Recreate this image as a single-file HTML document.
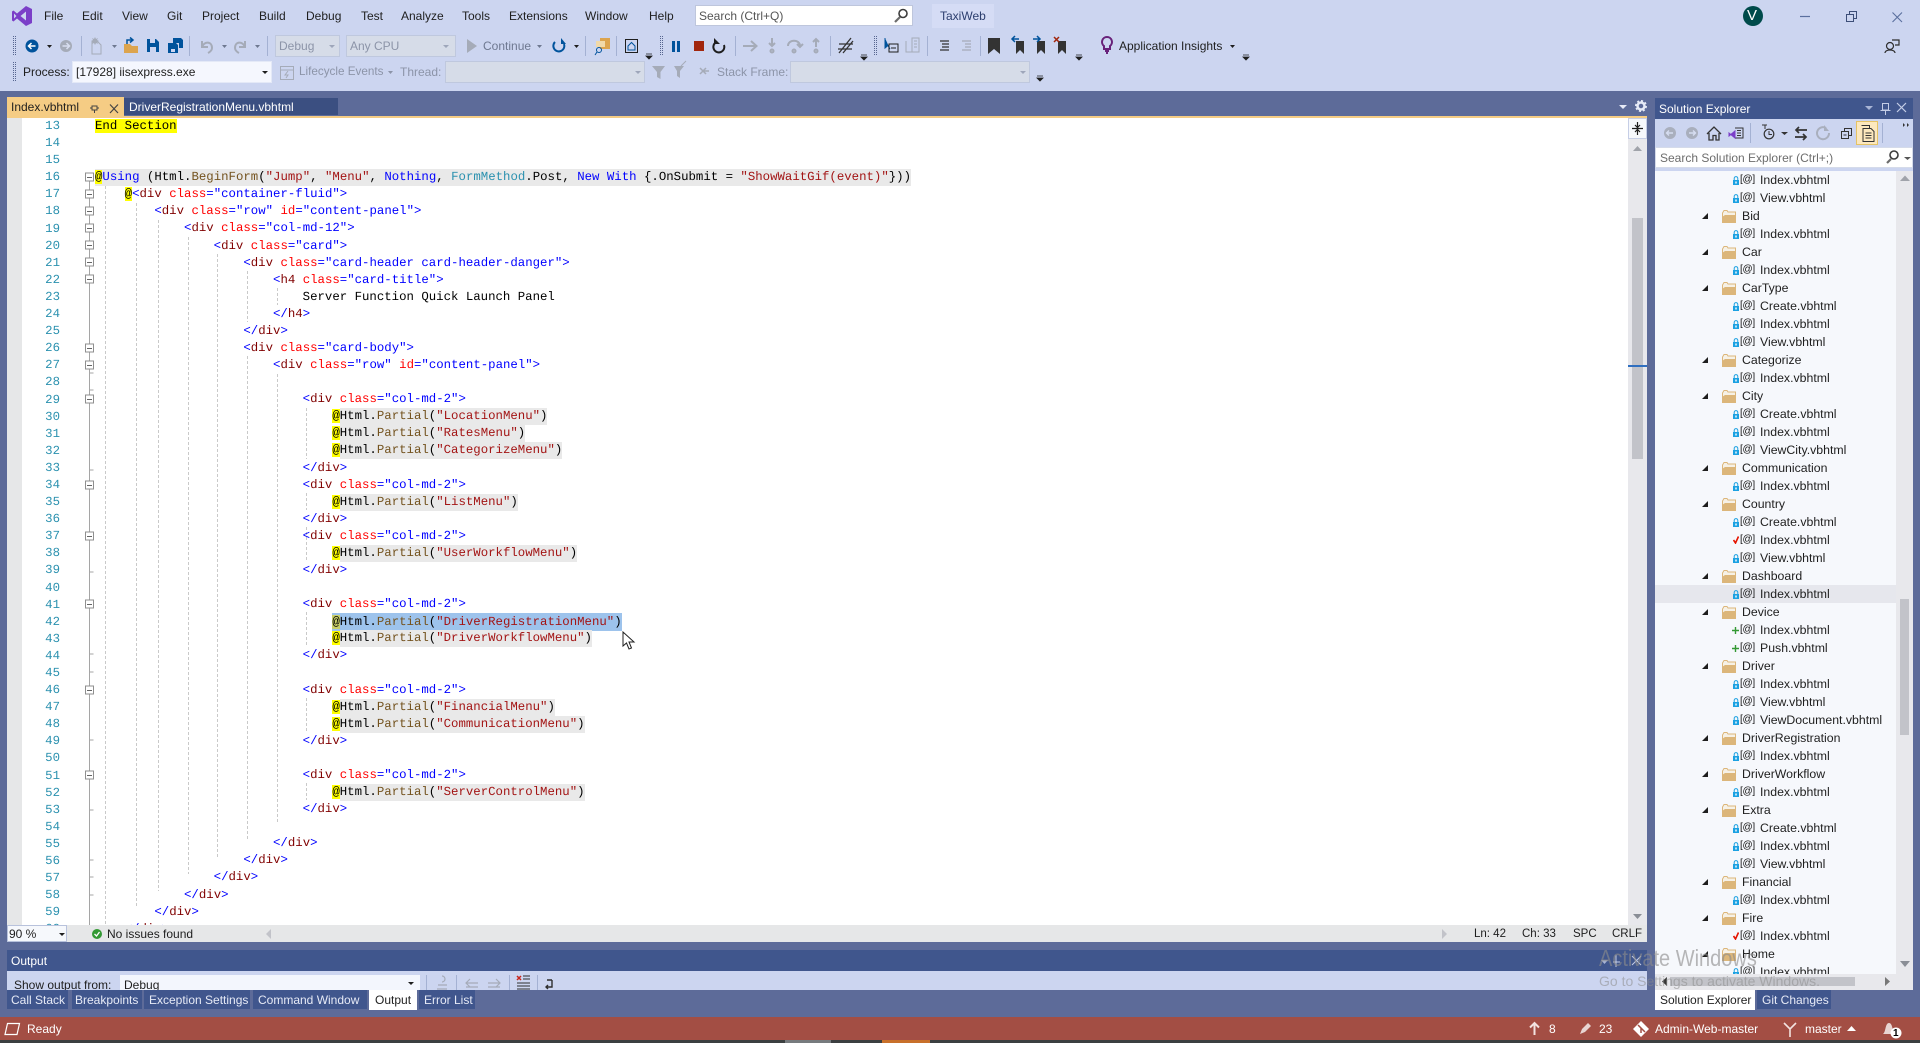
<!DOCTYPE html>
<html lang="en"><head><meta charset="utf-8"><title>TaxiWeb</title>
<style>
html,body{margin:0;padding:0;width:1920px;height:1043px;overflow:hidden;background:#5D6B99}
body{position:relative;font-family:"Liberation Sans",sans-serif;font-size:12px;color:#1E1E1E}
.a{position:absolute}
.t{position:absolute;white-space:nowrap;line-height:16px;height:16px}
.w{color:#fff}
.d{color:#8C94A8}
.c{position:absolute;box-sizing:border-box;border:1px solid #BFC8DE;background:#D6DCE8}
#code,#nums{position:absolute;font-family:"Liberation Mono",monospace;font-size:12.36px;line-height:17.09px;text-rendering:geometricPrecision}
#nums{left:30px;top:118px;width:30px;text-align:right;color:#2B91AF;white-space:pre}
#code{left:95px;top:118px;color:#000;white-space:normal;width:1500px}
#code div{height:17.09px;white-space:pre}
#code b,#code i,#code u,#code em{font-weight:normal;font-style:normal;text-decoration:none}
#code b{color:#0000FF}#code i{color:#800000}#code u{color:#FF0000}#code em{color:#74531F}
.s{color:#A31515}.y{background:#FFFF00}.g{background:#E9E9E9;display:inline-block;line-height:17px}.l{background:#9DC3EC;display:inline-block;line-height:18px}
#tree{position:absolute;left:1655px;top:171px;width:241px;height:803px;overflow:hidden;background:#F6F8FC}
#tree div{position:relative;height:18px;line-height:18px;font-size:12.3px;white-space:nowrap;color:#1E1E1E}
.f{padding-left:105px}.o{padding-left:87px}
#tree svg{position:absolute}
#tree span{position:absolute;left:85px;top:0;font-size:10px;letter-spacing:-.3px;color:#111}
.sel{background:#E6E7ED}
</style></head>
<body>
<svg width="0" height="0" style="position:absolute"><defs>
<symbol id="lk" viewBox="0 0 6 9"><path d="M1.2 4V2.4a1.8 1.8 0 0 1 3.6 0V4" fill="none" stroke="#1BA1E2" stroke-width="1"/><rect x="0" y="4" width="6" height="5" fill="#1BA1E2"/><rect x="2.3" y="5.5" width="1.4" height="2" fill="#fff"/></symbol>
<symbol id="fo" viewBox="0 0 14 13"><path d="M.5 3V12.5H13.5V2H6L5 .5H2Z" fill="#F6F1E6" stroke="#DCB67A"/><path d="M0 13V7L3 5H14V13Z" fill="#DCB67A"/></symbol>
<symbol id="ar" viewBox="0 0 6 6"><path d="M6 0V6H0Z" fill="#1E1E1E"/></symbol>
</defs></svg>

<!-- chrome -->
<div class="a" style="left:0;top:0;width:1920px;height:91px;background:#CCD5F0"></div>
<div class="a" style="left:932px;top:4px;width:62px;height:24px;background:#D5DCF5"></div>
<div class="a" style="left:695px;top:5px;width:218px;height:21px;background:#fff;border:1px solid #BEC6DC;box-sizing:border-box"></div>
<div class="c" style="left:275px;top:35px;width:65px;height:22px"></div>
<div class="c" style="left:346px;top:35px;width:110px;height:22px"></div>
<div class="a" style="left:72px;top:61px;width:200px;height:22px;background:#F5F7FE;box-sizing:border-box;border:1px solid #E4E9F7"></div>
<div class="c" style="left:445px;top:61px;width:200px;height:22px"></div>
<div class="c" style="left:790px;top:61px;width:240px;height:22px"></div>

<!-- tabs -->
<div class="a" style="left:7px;top:97px;width:117px;height:21px;background:#F5CC84"></div>
<div class="a" style="left:124px;top:98px;width:214px;height:17px;background:#3B4F81"></div>
<div class="a" style="left:7px;top:116px;width:1640px;height:2px;background:#F5CC84"></div>

<!-- editor -->
<div class="a" style="left:7px;top:118px;width:1640px;height:807px;background:#fff;overflow:hidden"></div>
<div class="a" style="left:7px;top:118px;width:15px;height:807px;background:#E6E7E8"></div>
<div class="a" style="left:1628px;top:118px;width:19px;height:807px;background:#E8E8EC"></div>
<div class="a" style="left:1628px;top:118px;width:19px;height:21px;background:#F6F8FC;border:1px solid #C6CEE6;box-sizing:border-box"></div>
<div class="a" style="left:1632px;top:218px;width:11px;height:241px;background:#C2C3C9"></div>
<div class="a" style="left:1628px;top:365px;width:19px;height:2px;background:#2F6FC0"></div>

<div class="a" id="hl" style="left:0;top:0;width:1628px;height:925px;overflow:hidden">
<div id="nums">13
14
15
16
17
18
19
20
21
22
23
24
25
26
27
28
29
30
31
32
33
34
35
36
37
38
39
40
41
42
43
44
45
46
47
48
49
50
51
52
53
54
55
56
57
58
59
60</div>
<svg class="a" style="left:0;top:0" width="320" height="925" fill="none">
<g stroke="#A5A5A5" stroke-width="1"><path d="M89.5 177V925"/>
<path d="M89.5 373h4M89.5 390h4M89.5 470h4M89.5 538h4M89.5 572h4M89.5 654h4M89.5 672h4M89.5 740h4M89.5 810h4M89.5 860h4M89.5 877h4M89.5 895h4"/></g>
<g stroke="#C9C9C9" stroke-dasharray="3 2">
<path d="M105.5 186V925M136.5 203V908M158.5 220V891M188.5 237V874M217.5 254V857"/>
<path d="M247.5 271V322M247.5 356V840M277.5 288V305M277.5 374V823"/>
<path d="M306.5 408V459M306.5 493V510M306.5 527V561M306.5 612V647M306.5 698V732M306.5 783V800"/>
</g>
<g fill="#fff" stroke="#8F8F8F">
<rect x="85.5" y="173" width="8" height="8"/><rect x="85.5" y="190" width="8" height="8"/><rect x="85.5" y="207" width="8" height="8"/><rect x="85.5" y="224" width="8" height="8"/><rect x="85.5" y="241" width="8" height="8"/><rect x="85.5" y="258" width="8" height="8"/><rect x="85.5" y="275" width="8" height="8"/><rect x="85.5" y="344" width="8" height="8"/><rect x="85.5" y="361" width="8" height="8"/><rect x="85.5" y="395" width="8" height="8"/><rect x="85.5" y="481" width="8" height="8"/><rect x="85.5" y="532" width="8" height="8"/><rect x="85.5" y="600" width="8" height="8"/><rect x="85.5" y="686" width="8" height="8"/><rect x="85.5" y="771" width="8" height="8"/>
</g>
<path stroke="#666" d="M87 177.5h5M87 194.5h5M87 211.5h5M87 228.5h5M87 245.5h5M87 262.5h5M87 279.5h5M87 348.5h5M87 365.5h5M87 399.5h5M87 485.5h5M87 536.5h5M87 604.5h5M87 690.5h5M87 775.5h5"/>
</svg>
<div id="code"><div><span class="y">End Section</span></div>
<div> </div>
<div> </div>
<div><span class="g"><span class="y">@</span><b>Using</b> (Html.<em>BeginForm</em>(<span class="s">"Jump"</span>, <span class="s">"Menu"</span>, <b>Nothing</b>, <span style="color:#2B91AF">FormMethod</span>.Post, <b>New</b> <b>With</b> {.OnSubmit = <span class="s">"ShowWaitGif(event)"</span>}))</span></div>
<div>    <span class="y">@</span><b>&lt;</b><i>div</i> <u>class</u><b>="container-fluid"&gt;</b></div>
<div>        <b>&lt;</b><i>div</i> <u>class</u><b>="row"</b> <u>id</u><b>="content-panel"&gt;</b></div>
<div>            <b>&lt;</b><i>div</i> <u>class</u><b>="col-md-12"&gt;</b></div>
<div>                <b>&lt;</b><i>div</i> <u>class</u><b>="card"&gt;</b></div>
<div>                    <b>&lt;</b><i>div</i> <u>class</u><b>="card-header card-header-danger"&gt;</b></div>
<div>                        <b>&lt;</b><i>h4</i> <u>class</u><b>="card-title"&gt;</b></div>
<div>                            Server Function Quick Launch Panel</div>
<div>                        <b>&lt;/</b><i>h4</i><b>&gt;</b></div>
<div>                    <b>&lt;/</b><i>div</i><b>&gt;</b></div>
<div>                    <b>&lt;</b><i>div</i> <u>class</u><b>="card-body"&gt;</b></div>
<div>                        <b>&lt;</b><i>div</i> <u>class</u><b>="row"</b> <u>id</u><b>="content-panel"&gt;</b></div>
<div> </div>
<div>                            <b>&lt;</b><i>div</i> <u>class</u><b>="col-md-2"&gt;</b></div>
<div>                                <span class="y">@</span><span class="g">Html.<em>Partial</em>(<span class="s">"LocationMenu"</span>)</span></div>
<div>                                <span class="y">@</span><span class="g">Html.<em>Partial</em>(<span class="s">"RatesMenu"</span>)</span></div>
<div>                                <span class="y">@</span><span class="g">Html.<em>Partial</em>(<span class="s">"CategorizeMenu"</span>)</span></div>
<div>                            <b>&lt;/</b><i>div</i><b>&gt;</b></div>
<div>                            <b>&lt;</b><i>div</i> <u>class</u><b>="col-md-2"&gt;</b></div>
<div>                                <span class="y">@</span><span class="g">Html.<em>Partial</em>(<span class="s">"ListMenu"</span>)</span></div>
<div>                            <b>&lt;/</b><i>div</i><b>&gt;</b></div>
<div>                            <b>&lt;</b><i>div</i> <u>class</u><b>="col-md-2"&gt;</b></div>
<div>                                <span class="y">@</span><span class="g">Html.<em>Partial</em>(<span class="s">"UserWorkflowMenu"</span>)</span></div>
<div>                            <b>&lt;/</b><i>div</i><b>&gt;</b></div>
<div> </div>
<div>                            <b>&lt;</b><i>div</i> <u>class</u><b>="col-md-2"&gt;</b></div>
<div>                                <span class="l"><span style="background:#C9D06A">@</span>Html.<em>Partial</em>(<span class="s">"DriverRegistrationMenu"</span>)</span></div>
<div>                                <span class="y">@</span><span class="g">Html.<em>Partial</em>(<span class="s">"DriverWorkflowMenu"</span>)</span></div>
<div>                            <b>&lt;/</b><i>div</i><b>&gt;</b></div>
<div> </div>
<div>                            <b>&lt;</b><i>div</i> <u>class</u><b>="col-md-2"&gt;</b></div>
<div>                                <span class="y">@</span><span class="g">Html.<em>Partial</em>(<span class="s">"FinancialMenu"</span>)</span></div>
<div>                                <span class="y">@</span><span class="g">Html.<em>Partial</em>(<span class="s">"CommunicationMenu"</span>)</span></div>
<div>                            <b>&lt;/</b><i>div</i><b>&gt;</b></div>
<div> </div>
<div>                            <b>&lt;</b><i>div</i> <u>class</u><b>="col-md-2"&gt;</b></div>
<div>                                <span class="y">@</span><span class="g">Html.<em>Partial</em>(<span class="s">"ServerControlMenu"</span>)</span></div>
<div>                            <b>&lt;/</b><i>div</i><b>&gt;</b></div>
<div> </div>
<div>                        <b>&lt;/</b><i>div</i><b>&gt;</b></div>
<div>                    <b>&lt;/</b><i>div</i><b>&gt;</b></div>
<div>                <b>&lt;/</b><i>div</i><b>&gt;</b></div>
<div>            <b>&lt;/</b><i>div</i><b>&gt;</b></div>
<div>        <b>&lt;/</b><i>div</i><b>&gt;</b></div>
<div>    <b>&lt;/</b><i>div</i><b>&gt;</b></div></div>
</div>

<!-- editor status -->
<div class="a" style="left:7px;top:925px;width:1640px;height:17px;background:#E6E7E8"></div>
<div class="a" style="left:7px;top:925px;width:60px;height:17px;background:#F6F8FC;border:1px solid #B8C2DC;box-sizing:border-box"></div>

<!-- Output pane -->
<div class="a" style="left:7px;top:950px;width:1640px;height:21px;background:#40568D"></div>
<div class="a" style="left:7px;top:971px;width:1640px;height:19px;background:#CCD5F0"></div>
<div class="a" style="left:120px;top:975px;width:300px;height:15px;background:#F3F6FD"></div>

<!-- Solution explorer -->
<div class="a" style="left:1655px;top:98px;width:258px;height:21px;background:#40568D"></div>
<div class="a" style="left:1655px;top:119px;width:258px;height:28px;background:#CCD5F0"></div>
<div class="a" style="left:1856px;top:121px;width:22px;height:24px;background:#FCE8BE;border:1px solid #E5C365;box-sizing:border-box"></div>
<div class="a" style="left:1655px;top:147px;width:258px;height:24px;background:#CCD5F0"></div>
<div class="a" style="left:1655px;top:147px;width:258px;height:21px;background:#fff;border:1px solid #D5DBEA;box-sizing:border-box"></div>
<div class="a" style="left:1896px;top:171px;width:17px;height:803px;background:#E8E8EC"></div>
<div class="a" style="left:1900px;top:599px;width:9px;height:136px;background:#C2C3C9"></div>
<div class="a" style="left:1655px;top:974px;width:258px;height:16px;background:#E8E8EC"></div>
<div class="a" style="left:1670px;top:977px;width:185px;height:9px;background:#C2C3C9"></div>

<div id="tree">
<div class="f"><svg width="6" height="9" style="left:78px;top:5px"><use href="#lk"/></svg><span>[@]</span>Index.vbhtml</div>
<div class="f"><svg width="6" height="9" style="left:78px;top:5px"><use href="#lk"/></svg><span>[@]</span>View.vbhtml</div>
<div class="o"><svg width="6" height="6" style="left:47px;top:6px"><use href="#ar"/></svg><svg width="14" height="13" style="left:67px;top:3px"><use href="#fo"/></svg>Bid</div>
<div class="f"><svg width="6" height="9" style="left:78px;top:5px"><use href="#lk"/></svg><span>[@]</span>Index.vbhtml</div>
<div class="o"><svg width="6" height="6" style="left:47px;top:6px"><use href="#ar"/></svg><svg width="14" height="13" style="left:67px;top:3px"><use href="#fo"/></svg>Car</div>
<div class="f"><svg width="6" height="9" style="left:78px;top:5px"><use href="#lk"/></svg><span>[@]</span>Index.vbhtml</div>
<div class="o"><svg width="6" height="6" style="left:47px;top:6px"><use href="#ar"/></svg><svg width="14" height="13" style="left:67px;top:3px"><use href="#fo"/></svg>CarType</div>
<div class="f"><svg width="6" height="9" style="left:78px;top:5px"><use href="#lk"/></svg><span>[@]</span>Create.vbhtml</div>
<div class="f"><svg width="6" height="9" style="left:78px;top:5px"><use href="#lk"/></svg><span>[@]</span>Index.vbhtml</div>
<div class="f"><svg width="6" height="9" style="left:78px;top:5px"><use href="#lk"/></svg><span>[@]</span>View.vbhtml</div>
<div class="o"><svg width="6" height="6" style="left:47px;top:6px"><use href="#ar"/></svg><svg width="14" height="13" style="left:67px;top:3px"><use href="#fo"/></svg>Categorize</div>
<div class="f"><svg width="6" height="9" style="left:78px;top:5px"><use href="#lk"/></svg><span>[@]</span>Index.vbhtml</div>
<div class="o"><svg width="6" height="6" style="left:47px;top:6px"><use href="#ar"/></svg><svg width="14" height="13" style="left:67px;top:3px"><use href="#fo"/></svg>City</div>
<div class="f"><svg width="6" height="9" style="left:78px;top:5px"><use href="#lk"/></svg><span>[@]</span>Create.vbhtml</div>
<div class="f"><svg width="6" height="9" style="left:78px;top:5px"><use href="#lk"/></svg><span>[@]</span>Index.vbhtml</div>
<div class="f"><svg width="6" height="9" style="left:78px;top:5px"><use href="#lk"/></svg><span>[@]</span>ViewCity.vbhtml</div>
<div class="o"><svg width="6" height="6" style="left:47px;top:6px"><use href="#ar"/></svg><svg width="14" height="13" style="left:67px;top:3px"><use href="#fo"/></svg>Communication</div>
<div class="f"><svg width="6" height="9" style="left:78px;top:5px"><use href="#lk"/></svg><span>[@]</span>Index.vbhtml</div>
<div class="o"><svg width="6" height="6" style="left:47px;top:6px"><use href="#ar"/></svg><svg width="14" height="13" style="left:67px;top:3px"><use href="#fo"/></svg>Country</div>
<div class="f"><svg width="6" height="9" style="left:78px;top:5px"><use href="#lk"/></svg><span>[@]</span>Create.vbhtml</div>
<div class="f"><svg width="6" height="8" style="left:78px;top:5px"><path d="M.5 4L2.5 7L5.5 .5" fill="none" stroke="#E51400" stroke-width="1.6"/></svg><span>[@]</span>Index.vbhtml</div>
<div class="f"><svg width="6" height="9" style="left:78px;top:5px"><use href="#lk"/></svg><span>[@]</span>View.vbhtml</div>
<div class="o"><svg width="6" height="6" style="left:47px;top:6px"><use href="#ar"/></svg><svg width="14" height="13" style="left:67px;top:3px"><use href="#fo"/></svg>Dashboard</div>
<div class="f sel"><svg width="6" height="9" style="left:78px;top:5px"><use href="#lk"/></svg><span>[@]</span>Index.vbhtml</div>
<div class="o"><svg width="6" height="6" style="left:47px;top:6px"><use href="#ar"/></svg><svg width="14" height="13" style="left:67px;top:3px"><use href="#fo"/></svg>Device</div>
<div class="f"><svg width="7" height="7" style="left:77px;top:6px"><path d="M3.5 0V7M0 3.5H7" stroke="#339933" stroke-width="1.4"/></svg><span>[@]</span>Index.vbhtml</div>
<div class="f"><svg width="7" height="7" style="left:77px;top:6px"><path d="M3.5 0V7M0 3.5H7" stroke="#339933" stroke-width="1.4"/></svg><span>[@]</span>Push.vbhtml</div>
<div class="o"><svg width="6" height="6" style="left:47px;top:6px"><use href="#ar"/></svg><svg width="14" height="13" style="left:67px;top:3px"><use href="#fo"/></svg>Driver</div>
<div class="f"><svg width="6" height="9" style="left:78px;top:5px"><use href="#lk"/></svg><span>[@]</span>Index.vbhtml</div>
<div class="f"><svg width="6" height="9" style="left:78px;top:5px"><use href="#lk"/></svg><span>[@]</span>View.vbhtml</div>
<div class="f"><svg width="6" height="9" style="left:78px;top:5px"><use href="#lk"/></svg><span>[@]</span>ViewDocument.vbhtml</div>
<div class="o"><svg width="6" height="6" style="left:47px;top:6px"><use href="#ar"/></svg><svg width="14" height="13" style="left:67px;top:3px"><use href="#fo"/></svg>DriverRegistration</div>
<div class="f"><svg width="6" height="9" style="left:78px;top:5px"><use href="#lk"/></svg><span>[@]</span>Index.vbhtml</div>
<div class="o"><svg width="6" height="6" style="left:47px;top:6px"><use href="#ar"/></svg><svg width="14" height="13" style="left:67px;top:3px"><use href="#fo"/></svg>DriverWorkflow</div>
<div class="f"><svg width="6" height="9" style="left:78px;top:5px"><use href="#lk"/></svg><span>[@]</span>Index.vbhtml</div>
<div class="o"><svg width="6" height="6" style="left:47px;top:6px"><use href="#ar"/></svg><svg width="14" height="13" style="left:67px;top:3px"><use href="#fo"/></svg>Extra</div>
<div class="f"><svg width="6" height="9" style="left:78px;top:5px"><use href="#lk"/></svg><span>[@]</span>Create.vbhtml</div>
<div class="f"><svg width="6" height="9" style="left:78px;top:5px"><use href="#lk"/></svg><span>[@]</span>Index.vbhtml</div>
<div class="f"><svg width="6" height="9" style="left:78px;top:5px"><use href="#lk"/></svg><span>[@]</span>View.vbhtml</div>
<div class="o"><svg width="6" height="6" style="left:47px;top:6px"><use href="#ar"/></svg><svg width="14" height="13" style="left:67px;top:3px"><use href="#fo"/></svg>Financial</div>
<div class="f"><svg width="6" height="9" style="left:78px;top:5px"><use href="#lk"/></svg><span>[@]</span>Index.vbhtml</div>
<div class="o"><svg width="6" height="6" style="left:47px;top:6px"><use href="#ar"/></svg><svg width="14" height="13" style="left:67px;top:3px"><use href="#fo"/></svg>Fire</div>
<div class="f"><svg width="6" height="8" style="left:78px;top:5px"><path d="M.5 4L2.5 7L5.5 .5" fill="none" stroke="#E51400" stroke-width="1.6"/></svg><span>[@]</span>Index.vbhtml</div>
<div class="o"><svg width="6" height="6" style="left:47px;top:6px"><use href="#ar"/></svg><svg width="14" height="13" style="left:67px;top:3px"><use href="#fo"/></svg>Home</div>
<div class="f"><svg width="6" height="9" style="left:78px;top:5px"><use href="#lk"/></svg><span>[@]</span>Index.vbhtml</div>
</div>

<!-- icon overlay -->
<svg class="a" style="left:0;top:0" width="1920" height="1043" fill="none">
<!-- logo -->
<path d="M26 6L32 9V23L26 26L17 18.5L13.5 21.5L12 20.5V11.5L13.5 10.5L17 13.5ZM26 11.5L20.5 16L26 20.5ZM14 13.5V18.5L16.5 16Z" fill="#7B3FC8" fill-rule="evenodd"/>
<!-- grippers -->
<g stroke="#56658F" stroke-dasharray="1 1"><path d="M13.5 36V56M15.5 36V56M13.5 62V82M15.5 62V82M660.5 36V56M662.5 36V56M874.5 36V56M876.5 36V56"/></g>
<!-- separators -->
<path stroke="#A4B1D3" d="M81.5 36V56M189.5 36V56M267.5 36V56M585.5 36V56M616.5 36V56M735.5 36V56M830.5 36V56M927.5 36V56M980.5 36V56M1750.5 123V143M1882.5 123V143"/>
<!-- row 1 left -->
<circle cx="32" cy="46" r="6.5" fill="#00539C"/><path d="M35.5 46H29M31.5 43L28.5 46L31.5 49" stroke="#fff" stroke-width="1.5"/>
<path d="M47 45h5l-2.5 3z" fill="#1E1E1E"/>
<circle cx="66" cy="46" r="6" fill="#A5ABB8"/><path d="M62.5 46H69M66.5 43L69.5 46L66.5 49" stroke="#D8DEEF" stroke-width="1.5"/>
<path d="M92 42V54H101V45L98 42Z" stroke="#A5ABB8"/><path d="M95 37l1 2 2-1-1 2 2 1-2 1 1 2-2-1-1 2-1-2-2 1 1-2-2-1 2-1-1-2 2 1z" fill="#A5ABB8"/>
<path d="M112 45h5l-2.5 3z" fill="#6E7890"/>
<path d="M124 53V44H130L132 46H138V53Z" fill="#DCA44E"/><path d="M127 44V40H132M130 37.5L133 40L130 42.5" stroke="#00539C" stroke-width="1.5"/>
<path d="M147 39H156L159 42V52H147Z" fill="#00539C"/><rect x="150" y="39" width="5" height="4" fill="#CCD5F0"/><rect x="150" y="47" width="6" height="5" fill="#CCD5F0"/>
<path d="M168 43H176L178 45V53H168Z" fill="#00539C"/><path d="M173 38H181L183 40V48H179V43H173Z" fill="#00539C"/><rect x="171" y="49" width="4" height="3" fill="#CCD5F0"/>
<path d="M202 41V47H208M202 47C204 41 212 41 212 48C212 50 210 52 208 53" stroke="#A5ABB8" stroke-width="2"/>
<path d="M222 45h5l-2.5 3z" fill="#6E7890"/>
<path d="M245 41V47H239M245 47C243 41 235 41 235 48C235 50 237 52 239 53" stroke="#A5ABB8" stroke-width="2"/>
<path d="M255 45h5l-2.5 3z" fill="#6E7890"/>
<path d="M329 45h6l-3 3zM443 45h6l-3 3z" fill="#9EA6BA"/>
<path d="M467 39L477 46L467 53Z" fill="#A5ABB8"/>
<path d="M537 45h5l-2.5 3z" fill="#6E7890"/>
<path d="M555 42A5.500 5.500 0 1 0 564 44" stroke="#00539C" stroke-width="2"/><path d="M561 38V44H566Z" fill="#00539C"/>
<path d="M574 45h5l-2.5 3z" fill="#1E1E1E"/>
<rect x="600" y="38" width="10" height="11" fill="#DCA44E"/><rect x="596" y="41" width="9" height="6" fill="#F1D9A9"/><circle cx="599" cy="50" r="2.5" stroke="#00539C"/><path d="M597 52L595 55" stroke="#00539C"/>
<rect x="625.500" y="39.500" width="12" height="13" stroke="#1E1E1E"/><path d="M628 46L631.500 42.500L635 46V50H628Z" stroke="#00539C"/>
<path d="M646 54h6M646 56h6l-3 3z" stroke="#1E1E1E" stroke-width=".8" fill="#1E1E1E"/>
<rect x="672" y="41" width="3" height="11" fill="#00539C"/><rect x="677" y="41" width="3" height="11" fill="#00539C"/>
<rect x="694" y="41" width="10" height="10" fill="#A1260D"/>
<path d="M715 43A5.500 5.500 0 1 0 724 45" stroke="#1E1E1E" stroke-width="2"/><path d="M714 38V44H720Z" fill="#1E1E1E"/>
<!-- debug step icons -->
<g stroke="#A5ABB8" stroke-width="2"><path d="M743 46H756M751 41L756.500 46L751 51"/><path d="M772 38V46M769 43L772 46L775 43"/><circle cx="772" cy="51" r="1.500"/><path d="M788 46C788 39 800 39 800 46M797 44L800 47L803 44"/><circle cx="794" cy="51" r="1.500"/><path d="M816 47V39M813 42L816 39L819 42"/><circle cx="816" cy="51" r="1.500"/></g>
<path d="M839 53L851 38M843 53L853 41M839 44H853M838 49H852" stroke="#333" stroke-width="1.300"/>
<path d="M861 55h6M861 57h6l-3 3z" stroke="#1E1E1E" stroke-width=".8" fill="#1E1E1E"/>
<path d="M885 38V48L888 45.500L890 49" fill="#00539C" stroke="#00539C"/><path d="M889 44H898V52H889Z" stroke="#1E1E1E"/><path d="M891 48H896" stroke="#1E1E1E"/>
<path d="M906 41V52H912M912 38H919V52H912ZM914 41H917M914 44H917M914 47H917" stroke="#A5ABB8"/>
<path d="M940 41H949M942 44H949M942 47H949M940 50H949" stroke="#333" stroke-width="1.200"/>
<path d="M962 41H971M965 44H971M965 47H971M962 50H971" stroke="#A5ABB8" stroke-width="1.200"/>
<path d="M988 38H1000V54L994 49L988 54Z" fill="#333"/>
<path d="M1016 41H1024V54L1020 50L1016 54Z" fill="#333"/><path d="M1019 39H1012M1015 36L1012 39L1015 42" stroke="#00539C" stroke-width="1.500"/>
<path d="M1037 41H1045V54L1041 50L1037 54Z" fill="#333"/><path d="M1033 39H1040M1037 36L1040 39L1037 42" stroke="#00539C" stroke-width="1.500"/>
<path d="M1058 41H1066V54L1062 50L1058 54Z" fill="#333"/><path d="M1054 37L1059 42M1059 37L1054 42" stroke="#A1260D" stroke-width="1.500"/>
<path d="M1076 55h6M1076 57h6l-3 3z" stroke="#1E1E1E" stroke-width=".8" fill="#1E1E1E"/>
<path d="M1107 37A5 5 0 0 0 1104 46V49H1110V46A5 5 0 0 0 1107 37ZM1105 51H1109M1106 53H1108" stroke="#68217A" stroke-width="2"/>
<path d="M1230 45h5l-2.500 3z" fill="#1E1E1E"/>
<path d="M1243 55h6M1243 57h6l-3 3z" stroke="#1E1E1E" stroke-width=".8" fill="#1E1E1E"/>
<!-- row 2 -->
<path d="M262 71h6l-3 3z" fill="#1E1E1E"/>
<rect x="280.500" y="66.500" width="13" height="13" stroke="#A5ABB8"/><path d="M280 70H294M288 71L285 75H288L286 78" stroke="#A5ABB8"/>
<path d="M388 71h5l-2.500 3z" fill="#8C94A8"/>
<path d="M635 71h6l-3 3z" fill="#9EA6BA"/><path d="M1020 71h6l-3 3z" fill="#9EA6BA"/>
<path d="M652 66H665L660.500 72V79L657 77V72Z" fill="#A5ABB8"/>
<path d="M674 66H684L680 71V78L677 76V71Z" fill="#A5ABB8"/><path d="M681 66L686 61" stroke="#A5ABB8"/>
<path d="M700 68L706 74M706 68L700 74M702 71L709 71" stroke="#A5ABB8" stroke-width="1.500"/>
<path d="M1037 76h6M1037 78h6l-3 3z" stroke="#1E1E1E" stroke-width=".8" fill="#1E1E1E"/>
<!-- search icon -->
<circle cx="903" cy="13.500" r="4" stroke="#3C3C3C" stroke-width="1.600"/><path d="M900 17L895 22" stroke="#6C6C6C" stroke-width="2.200"/>
<!-- window -->
<circle cx="1753" cy="16" r="10" fill="#004B4B"/>
<path d="M1800 16.500H1810" stroke="#5A6F9E" stroke-width="1.200"/>
<path d="M1846.500 14.500H1853.500V21.500H1846.500ZM1849.500 14V11.500H1856.500V18.500H1854" stroke="#3C4E78"/>
<path d="M1892.500 12.500L1902 22M1902 12.500L1892.500 22" stroke="#5A6F9E" stroke-width="1.100"/>
<circle cx="1890" cy="46" r="3.500" stroke="#2E2E2E" stroke-width="1.200"/><path d="M1885 53C1885 49 1895 49 1895 53M1892 40H1899V45H1895" stroke="#2E2E2E" stroke-width="1.200"/>
<!-- panel -->
<path d="M1619 105h8l-4 4z" fill="#E6EAF6"/>
<circle cx="1641" cy="106" r="3.500" stroke="#E6EAF6" stroke-width="2.500"/><circle cx="1641" cy="106" r="5" stroke="#E6EAF6" stroke-dasharray="2 1.900" stroke-width="2"/>
<!-- editor scrollbar -->
<path d="M1632 128.500H1643M1637.500 122V127M1635 125L1637.500 127.500L1640 125M1637.500 130V135M1635 132L1637.500 129.500L1640 132" stroke="#1E1E1E" stroke-width="1.200"/>
<path d="M1633 151L1637.500 146L1642 151Z" fill="#A0A3AA"/><path d="M1633 914L1637.500 919L1642 914Z" fill="#8A8E96"/>
<!-- tree scrollbars -->
<path d="M1900 181L1905 175.500L1910 181Z" fill="#A0A3AA"/><path d="M1900 961L1905 967L1910 961Z" fill="#8A8E96"/>
<path d="M1667 977V986L1662 981.500Z" fill="#333"/><path d="M1885 977V986L1890 981.500Z" fill="#777"/>
<!-- SE title -->
<path d="M1865 106h8l-4 4z" fill="#A9B5D6"/>
<path d="M1882.500 103.500H1888.500V110H1882.500ZM1880.500 110.500H1890.500M1885.500 110.500V115" stroke="#C4CDE6"/>
<path d="M1897 103L1906 112M1906 103L1897 112" stroke="#C4CDE6" stroke-width="1.200"/>
<!-- SE toolbar -->
<circle cx="1670" cy="133" r="6" fill="#A9AFBD"/><path d="M1673 133H1667M1669 130.500L1666.500 133L1669 135.500" stroke="#D6DDF1" stroke-width="1.400"/>
<circle cx="1692" cy="133" r="6" fill="#A9AFBD"/><path d="M1689 133H1695M1693 130.500L1695.500 133L1693 135.500" stroke="#D6DDF1" stroke-width="1.400"/>
<path d="M1707 134L1714 127L1721 134M1709 133V140H1713V135.500H1716V140H1719V133" stroke="#333" stroke-width="1.300"/>
<path d="M1735 128H1743V138H1735M1737 130.500H1741M1737 133H1741M1737 135.500H1741" stroke="#333"/>
<path d="M1729 133L1735 138V131L1729 136Z" fill="#7B3FC8" stroke="#7B3FC8"/>
<path d="M1762 125H1767M1765 125V129" stroke="#333"/><circle cx="1769" cy="134" r="4.800" stroke="#333" stroke-width="1.200"/><path d="M1769 131V134.500H1772" stroke="#333"/>
<path d="M1781 132h7l-3.500 3z" fill="#333"/>
<path d="M1807 130H1796M1799 127L1796 130L1799 133M1795 137H1806M1803 134L1806 137L1803 140" stroke="#333" stroke-width="1.700"/>
<path d="M1826 128A6 6 0 1 0 1829 133" stroke="#A9AFBD" stroke-width="2"/><path d="M1824 125V131H1829Z" fill="#A9AFBD"/>
<path d="M1841.500 131.500H1848.500V138.500H1841.500ZM1844.500 131V128.500H1851.500V135.500H1849M1843.500 135H1846.500" stroke="#333"/>
<path d="M1861.500 125.500H1869.500V129M1863 128.500H1871L1874 131.500V141.500H1863ZM1865.500 133H1871.500M1865.500 135.500H1871.500M1865.500 138H1871.500" stroke="#333"/>
<path d="M1903 123l2 2-2 2zM1907 123l2 2-2 2z" fill="#333"/>
<circle cx="1894" cy="155" r="4" stroke="#3C3C3C" stroke-width="1.600"/><path d="M1891 159L1887 163" stroke="#6C6C6C" stroke-width="2.200"/>
<path d="M1904 157h7l-3.500 3z" fill="#555"/>
<!-- tab pin close -->
<path d="M92 105h5v4h-5zM90 107h2M97 107h2M94.500 109v3" stroke="#444" transform="translate(0 1)"/>
<path d="M110 104.500L118 113M118 104.500L110 113" stroke="#444" stroke-width="1.200"/>
<!-- status line icons -->
<path d="M59 933h6l-3 3z" fill="#1E1E1E"/>
<circle cx="97" cy="934" r="5" fill="#339933"/><path d="M94.500 934L96.500 936L99.500 932" stroke="#fff" stroke-width="1.300"/>
<path d="M271 929V939L266 934Z" fill="#C2C3C9"/><path d="M1442 929V939L1447 934Z" fill="#C2C3C9"/>
<!-- output toolbar -->
<path d="M408 982h6l-3 3z" fill="#1E1E1E"/>
<path stroke="#A4B1D3" d="M426.500 975V990M456.500 975V990M509.500 975V990M537.500 975V990"/>
<path d="M437 989H447M442 976A3 3 0 0 1 442 982M438 985H447" stroke="#A5ABB8" stroke-width="1.200"/>
<path d="M466 983H478M470 979L466 983L470 987M466 987H478" stroke="#A5ABB8" stroke-width="1.200"/>
<path d="M488 983H500M496 979L500 983L496 987M488 987H500" stroke="#A5ABB8" stroke-width="1.200"/>
<path d="M517 976L521 980M521 976L517 980" stroke="#C8261D" stroke-width="1.500"/><path d="M523 976H530M523 979H530M517 983H530M517 986H530M517 989H530" stroke="#2E2E2E"/>
<path d="M547 980H552M552 980V987H546M548 985L546 987L548 989" stroke="#2E2E2E" stroke-width="1.400"/>
<!-- output window ctrl -->
<path d="M1601 960h7l-3.500 4z" fill="#A9B5D6"/><path d="M1616 955V962M1613 962H1620M1616 962V967" stroke="#C4CDE6"/><path d="M1632 956L1641 965M1641 956L1632 965" stroke="#C4CDE6"/>
</svg>

<!-- bottom tabs -->
<div class="a" style="left:7px;top:990px;width:61px;height:19px;background:#40568D"></div>
<div class="a" style="left:72px;top:990px;width:70px;height:19px;background:#40568D"></div>
<div class="a" style="left:144px;top:990px;width:106px;height:19px;background:#40568D"></div>
<div class="a" style="left:253px;top:990px;width:114px;height:19px;background:#40568D"></div>
<div class="a" style="left:369px;top:990px;width:48px;height:20px;background:#fff"></div>
<div class="a" style="left:419px;top:990px;width:56px;height:19px;background:#40568D"></div>
<div class="a" style="left:1655px;top:990px;width:100px;height:20px;background:#fff"></div>
<div class="a" style="left:1757px;top:990px;width:74px;height:19px;background:#40568D"></div>

<!-- status bar -->
<div class="a" style="left:0;top:1017px;width:1920px;height:23px;background:#A34E44"></div>
<div class="a" style="left:0;top:1040px;width:1920px;height:3px;background:#3B3F40"></div>
<div class="a" style="left:785px;top:1040px;width:46px;height:3px;background:#777B7E"></div>
<div class="a" style="left:882px;top:1040px;width:48px;height:3px;background:#C8702A"></div>
<svg class="a" style="left:0;top:1017px" width="1920" height="23" fill="none">
<path d="M7.500 6.500H19.500L17 17.500H5Z" stroke="#fff" stroke-width="1.200"/>
<path d="M1534.500 18V6M1530 10.500L1534.500 6L1539 10.500" stroke="#F3E3E0" stroke-width="2"/>
<path d="M1580 17L1582 12L1588 6L1591 9L1585 15Z" fill="#E8D5D2"/>
<path d="M1641 4L1649 12L1641 20L1633 12Z" fill="#fff"/><path d="M1638 8L1645 15M1641 11V16" stroke="#A34E44" stroke-width="1.500"/>
<path d="M1784 6L1790 12L1796 6M1790 12V20" stroke="#F3E3E0" stroke-width="1.600"/>
<path d="M1847 14L1851.500 9L1856 14Z" fill="#fff"/>
<path d="M1883 17C1886 15 1885 6 1889 6C1893 6 1892 15 1895 17Z" fill="#E8D5D2"/>
<circle cx="1896" cy="16" r="5.500" fill="#fff"/>
</svg>

<!-- text -->
<div class="t" style="left:44px;top:8px">File</div>
<div class="t" style="left:82px;top:8px">Edit</div>
<div class="t" style="left:122px;top:8px">View</div>
<div class="t" style="left:167px;top:8px">Git</div>
<div class="t" style="left:202px;top:8px">Project</div>
<div class="t" style="left:259px;top:8px">Build</div>
<div class="t" style="left:306px;top:8px">Debug</div>
<div class="t" style="left:361px;top:8px">Test</div>
<div class="t" style="left:401px;top:8px">Analyze</div>
<div class="t" style="left:462px;top:8px">Tools</div>
<div class="t" style="left:509px;top:8px">Extensions</div>
<div class="t" style="left:585px;top:8px">Window</div>
<div class="t" style="left:649px;top:8px">Help</div>
<div class="t" style="left:699px;top:8px;color:#555">Search (Ctrl+Q)</div>
<div class="t" style="left:940px;top:8px;color:#2C3E6E">TaxiWeb</div>
<div class="t w" style="left:1747px;top:8px;font-size:15px">V</div>
<div class="t d" style="left:279px;top:38px">Debug</div>
<div class="t d" style="left:350px;top:38px">Any CPU</div>
<div class="t" style="left:483px;top:38px;color:#6E7890">Continue</div>
<div class="t" style="left:1119px;top:38px">Application Insights</div>
<div class="t" style="left:23px;top:64px">Process:</div>
<div class="t" style="left:76px;top:64px">[17928] iisexpress.exe</div>
<div class="t d" style="left:299px;top:64px;font-size:11.7px">Lifecycle Events</div>
<div class="t d" style="left:400px;top:64px">Thread:</div>
<div class="t d" style="left:717px;top:64px">Stack Frame:</div>
<div class="t" style="left:11px;top:99px">Index.vbhtml</div>
<div class="t w" style="left:129px;top:99px">DriverRegistrationMenu.vbhtml</div>
<div class="t w" style="left:1659px;top:101px">Solution Explorer</div>
<div class="t" style="left:1660px;top:150px;color:#6D6D6D">Search Solution Explorer (Ctrl+;)</div>
<div class="t" style="left:9px;top:926px">90 %</div>
<div class="t" style="left:107px;top:926px">No issues found</div>
<div class="t" style="left:1474px;top:926px;font-size:11.500px">Ln: 42</div>
<div class="t" style="left:1522px;top:926px;font-size:11.500px">Ch: 33</div>
<div class="t" style="left:1573px;top:926px;font-size:11.500px">SPC</div>
<div class="t" style="left:1612px;top:926px;font-size:11.500px">CRLF</div>
<div class="t w" style="left:11px;top:953px">Output</div>
<div class="a" style="left:0;top:972px;width:500px;height:18px;overflow:hidden"><div class="t" style="left:14px;top:5px">Show output from:</div><div class="t" style="left:124px;top:5px">Debug</div></div>
<div class="t" style="left:11px;top:992px;color:#E6EAF6">Call Stack</div>
<div class="t" style="left:75px;top:992px;color:#E6EAF6">Breakpoints</div>
<div class="t" style="left:149px;top:992px;color:#E6EAF6">Exception Settings</div>
<div class="t" style="left:258px;top:992px;color:#E6EAF6">Command Window</div>
<div class="t" style="left:375px;top:992px">Output</div>
<div class="t" style="left:424px;top:992px;color:#E6EAF6">Error List</div>
<div class="t" style="left:1660px;top:992px">Solution Explorer</div>
<div class="t" style="left:1762px;top:992px;color:#E6EAF6">Git Changes</div>
<div class="t w" style="left:27px;top:1021px">Ready</div>
<div class="t w" style="left:1549px;top:1021px">8</div>
<div class="t w" style="left:1599px;top:1021px">23</div>
<div class="t w" style="left:1655px;top:1021px">Admin-Web-master</div>
<div class="t w" style="left:1805px;top:1021px">master</div>
<div class="t" style="left:1893px;top:1026px;font-size:10px;font-weight:bold;color:#000">1</div>

<!-- mouse cursor -->
<svg class="a" style="left:622px;top:631px" width="14" height="20"><path d="M1 1V15L4.500 12L7 18L9.500 17L7 11H12Z" fill="#fff" stroke="#222"/></svg>

<!-- watermark -->
<div class="t" style="left:1599px;top:950px;font-size:20px;line-height:18px;color:rgba(140,140,140,.62);transform:scaleY(1.150)">Activate Windows</div>
<div class="t" style="left:1599px;top:973px;font-size:14px;color:rgba(140,140,140,.55)">Go to Settings to activate Windows.</div>
</body></html>
